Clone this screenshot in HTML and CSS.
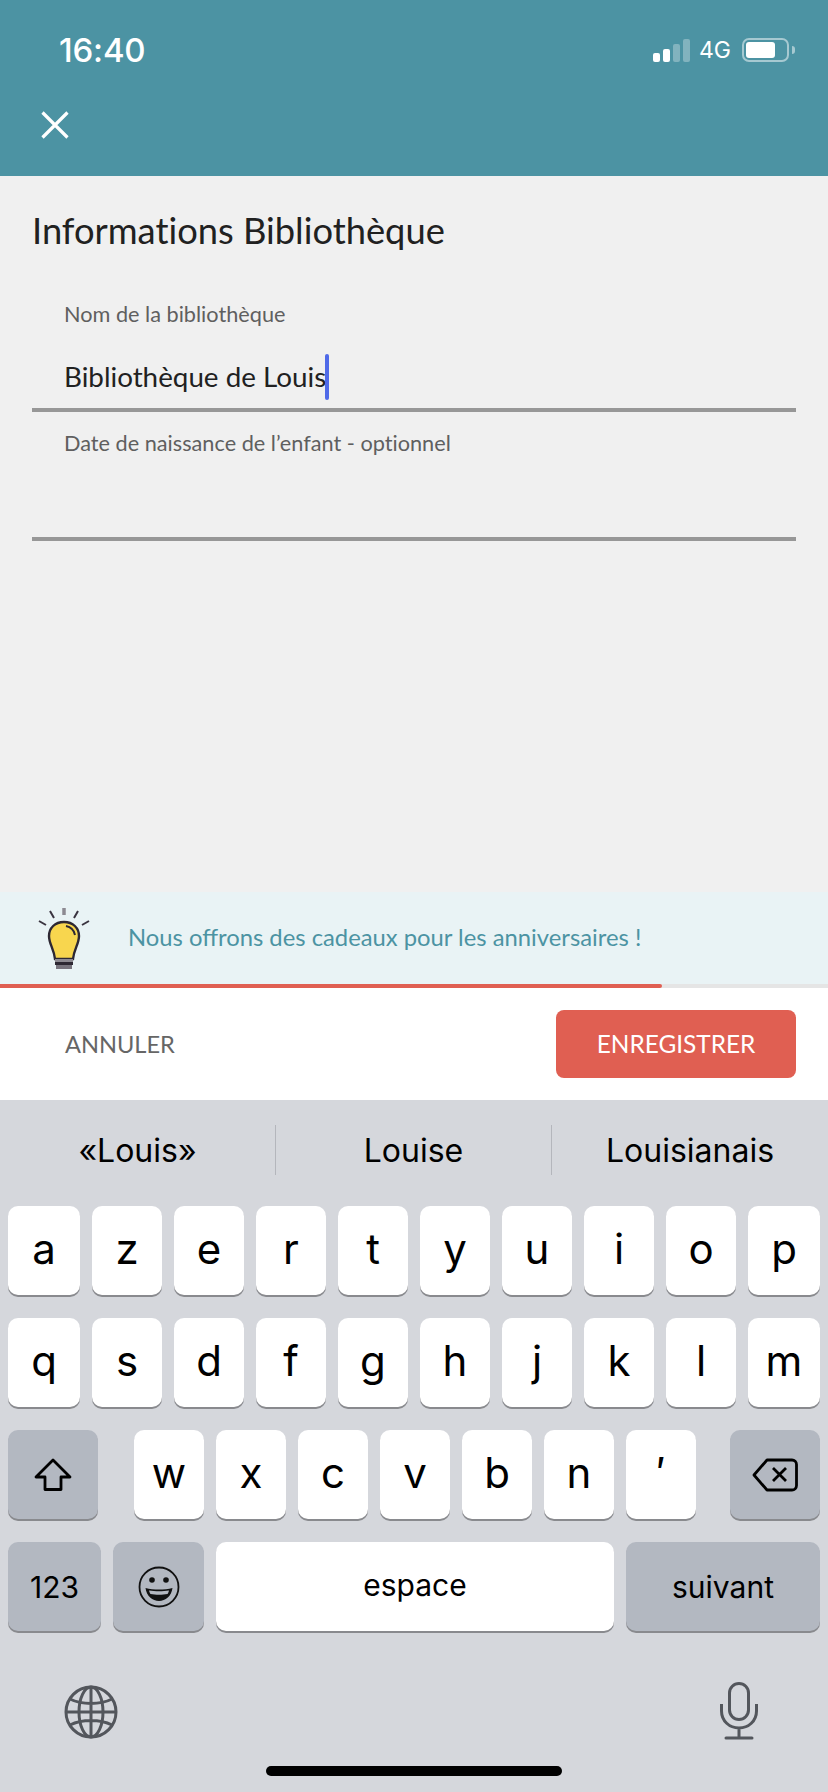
FILE: index.html
```html
<!DOCTYPE html>
<html lang="fr">
<head>
<meta charset="utf-8">
<title>Informations Bibliothèque</title>
<link rel="stylesheet" href="styles.css">
</head>
<body>
<div class="app">
  <header class="header">
    <div class="status">
      <span class="time">16:40</span>
      <div class="status-right">
        <div class="signal"><i class="bar b1"></i><i class="bar b2"></i><i class="bar b3"></i><i class="bar b4"></i></div>
        <span class="net">4G</span>
        <div class="battery"><div class="battery-body"><div class="battery-fill"></div></div><div class="battery-tip"></div></div>
      </div>
    </div>
    <svg class="close" viewBox="0 0 28 28" width="28" height="28"><path d="M1.5 1.5 26.500 26.500M26.500 1.500 1.500 26.500" stroke="#fff" stroke-width="3.200" fill="none"/></svg>
  </header>

  <main class="main">
    <h1 class="title">Informations Bibliothèque</h1>
    <div class="field field-first">
      <div class="label">Nom de la bibliothèque</div>
      <div class="value"><span>Bibliothèque de Louis</span><i class="caret"></i></div>
    </div>
    <div class="field">
      <div class="label">Date de naissance de l’enfant - optionnel</div>
      <div class="value"></div>
    </div>
  </main>

  <section class="tip">
    <svg class="bulb" viewBox="0 0 54 62" width="54" height="62">
      <g stroke="#3a3440" stroke-width="2" fill="none">
        <path d="M27 0v7" stroke="#8d8a92" stroke-width="3.500"/>
        <path d="M13 3l4 7M41 3l-4 7M2 13l7 4M52 13l-7 4"/>
      </g>
      <path d="M27 14c-9 0-15 6-15 14 0 8 5 13 6 23h18c1-10 6-15 6-23 0-8-6-14-15-14z" fill="#f8d64e" stroke="#2d2833" stroke-width="2.400"/>
      <path d="M29 18c5 1 8 4 9 9" stroke="#2d2833" stroke-width="2" fill="none"/>
      <rect x="18" y="51" width="18" height="3" fill="#8d8a92"/>
      <rect x="18" y="54" width="18" height="3" fill="#2d2833"/>
      <rect x="19" y="57" width="16" height="4" fill="#77737d"/>
    </svg>
    <p class="tip-text">Nous offrons des cadeaux pour les anniversaires !</p>
  </section>
  <div class="progress"><div class="progress-fill"></div></div>

  <footer class="actions">
    <span class="cancel">ANNULER</span>
    <span class="save">ENREGISTRER</span>
  </footer>

  <section class="keyboard">
    <div class="suggestions">
      <span class="sug">«Louis»</span>
      <span class="sug">Louise</span>
      <span class="sug">Louisianais</span>
    </div>
    <div class="rows">
      <div class="row row-10">
        <span class="key">a</span><span class="key">z</span><span class="key">e</span><span class="key">r</span><span class="key">t</span><span class="key">y</span><span class="key">u</span><span class="key">i</span><span class="key">o</span><span class="key">p</span>
      </div>
      <div class="row row-10">
        <span class="key">q</span><span class="key">s</span><span class="key">d</span><span class="key">f</span><span class="key">g</span><span class="key">h</span><span class="key">j</span><span class="key">k</span><span class="key">l</span><span class="key">m</span>
      </div>
      <div class="row row-3">
        <span class="key dark"><svg viewBox="0 0 40 34" width="40" height="34"><path d="M20 2 3 19h9v12.500h16V19h9z" fill="none" stroke="#000" stroke-width="2.800" stroke-linejoin="round"/></svg></span>
        <span class="key">w</span><span class="key">x</span><span class="key">c</span><span class="key">v</span><span class="key">b</span><span class="key">n</span><span class="key tick">′</span>
        <span class="key dark"><svg viewBox="0 0 46 34" width="46" height="34"><path d="M15 2h25a4.500 4.500 0 0 1 4.500 4.500v21a4.500 4.500 0 0 1-4.500 4.500H15L2 17z" fill="none" stroke="#000" stroke-width="2.800" stroke-linejoin="round"/><path d="M21 10l13 13M34 10 21 23" stroke="#000" stroke-width="2.800" fill="none"/></svg></span>
      </div>
      <div class="row row-4">
        <span class="key dark small">123</span>
        <span class="key dark"><svg viewBox="0 0 42 42" width="42" height="42"><circle cx="21" cy="21" r="19.500" fill="none" stroke="#111" stroke-width="1.800"/><circle cx="14" cy="14" r="2.800" fill="#111"/><circle cx="28" cy="14" r="2.800" fill="#111"/><path d="M7.500 22c8 2 19 2 27 0-1 8-7 13-13.500 13S8.500 30 7.500 22z" fill="#111"/><path d="M11 24.500c6 1 14 1 20 0-.5 2-1 3-1.500 3.500-5 1-12 1-17 0-.5-.5-1-1.500-1.500-3.500z" fill="#b3b8c1"/></svg></span>
        <span class="key small">espace</span>
        <span class="key dark small">suivant</span>
      </div>
    </div>
    <div class="kb-bottom">
      <svg class="globe" viewBox="0 0 54 54" width="54" height="54"><g fill="none" stroke="#53565c" stroke-width="3"><circle cx="27" cy="27" r="25"/><ellipse cx="27" cy="27" rx="12" ry="25"/><path d="M27 2v50M2 27h50M6 14c12 6 30 6 42 0M6 40c12-6 30-6 42 0"/></g></svg>
      <svg class="mic" viewBox="0 0 38 58" width="38" height="58"><g fill="none" stroke="#53565c" stroke-width="3"><rect x="9.500" y="1.500" width="19" height="36" rx="9.500"/><path d="M1.500 22v7c0 10 8 17 17.500 17s17.500-7 17.500-17v-7M19 46v10"/><path d="M6 56h26" stroke-linecap="round"/></g></svg>
    </div>
    <div class="home-wrap"><div class="home"></div></div>
  </section>
</div>
</body>
</html>
```

FILE: styles.css
```css
* { box-sizing: border-box; }
html, body { margin: 0; padding: 0; }
body { width: 828px; height: 1792px; overflow: hidden; background: #f0f0f0; font-family: Lato, "Liberation Sans", sans-serif; }
.app { display: flex; flex-direction: column; height: 1792px; }

/* header */
.header { height: 176px; flex: none; background: #4c93a3; color: #fff; padding-top: 25px; }
.status { height: 50px; display: flex; align-items: center; justify-content: space-between; padding: 0 33px 0 59px; }
.time { font: 500 33px/50px Inter, sans-serif; letter-spacing: -0.2px; }
.status-right { display: flex; align-items: center; }
.signal { display: flex; align-items: flex-end; gap: 3.500px; height: 23px; margin-right: 9px; }
.bar { display: block; width: 6.500px; background: #fff; border-radius: 2px; }
.b1 { height: 9px; }
.b2 { height: 13px; }
.b3 { height: 18px; background: rgba(255,255,255,.3); }
.b4 { height: 23px; background: rgba(255,255,255,.3); }
.net { font: 400 23px/26px Inter, sans-serif; margin-right: 11px; }
.battery { display: flex; align-items: center; }
.battery-body { width: 47px; height: 24px; border: 2px solid rgba(255,255,255,.5); border-radius: 7px; padding: 2px; }
.battery-fill { width: 29px; height: 16px; background: #fff; border-radius: 3px; }
.battery-tip { width: 3px; height: 8px; margin-left: 3px; background: rgba(255,255,255,.5); border-radius: 0 3px 3px 0; }
.close { display: block; margin: 36px 0 0 41px; }

/* form */
.main { flex: 1; padding: 0 32px; }
.title { margin: 32px 0 0; font: 400 36.3px/44px Lato, sans-serif; color: #212121; }
.field-first { margin-top: 48px; }
.label { padding-left: 32px; font: 400 21.7px/28px Lato, sans-serif; color: #5f5f5f; }
.value { height: 84px; padding: 29px 0 0 32px; display: flex; align-items: flex-start; border-bottom: 4px solid #979797; font: 400 27.8px/40px Lato, sans-serif; color: #212121; }
.field { margin-bottom: 17px; }
.caret { display: block; width: 4px; height: 46px; margin-top: -3px; margin-left: -1px; background: #4f6ae8; border-radius: 2px; }
.title, .label, .value, .tip-text { font-variant-ligatures: none; }

/* tip */
.tip { height: 92px; flex: none; display: flex; align-items: center; background: #e9f3f5; padding-left: 37px; }
.bulb { display: block; margin-top: 1px; }
.tip-text { margin: -2px 0 0 37px; font: 400 23.8px/30px Lato, sans-serif; color: #4c93a3; }
.progress { height: 4px; flex: none; background: #e5e5e5; }
.progress-fill { width: 662px; height: 4px; background: #e05f52; border-radius: 0 2px 2px 0; }

/* actions */
.actions { height: 112px; flex: none; display: flex; align-items: center; justify-content: space-between; background: #fff; padding: 0 32px 0 65px; }
.cancel { font: 400 23.6px/30px Lato, sans-serif; color: #666; }
.save { width: 240px; height: 68px; display: flex; align-items: center; justify-content: center; background: #e05f52; color: #fff; border-radius: 8px; font: 400 24.4px/30px Lato, sans-serif; }

/* keyboard */
.keyboard { height: 692px; flex: none; background: #d5d7dc; font-family: Inter, sans-serif; color: #000; }
.suggestions { height: 106px; padding: 25px 0 31px; display: grid; grid-template-columns: 276px 276px 276px; }
.sug { display: flex; align-items: center; justify-content: center; font-size: 32px; border-right: 1px solid #b4b6bc; }
.sug:last-child { border-right: 0; }
.rows { display: flex; flex-direction: column; gap: 23px; padding: 0 8px; }
.row { display: grid; gap: 12px; height: 89px; }
.row-10 { grid-template-columns: 72px repeat(8, 70px) 72px; }
.row-3 { display: flex; }
.row-3 .key { width: 70px; }
.row-3 .key.dark { width: 90px; }
.row-3 .key.dark:first-child { margin-right: 24px; }
.row-3 .key.dark:last-child { margin-left: 22px; }
.row-4 { grid-template-columns: 93px 91px 398px 194px; }
.key { display: flex; align-items: center; justify-content: center; background: #fff; border-radius: 10px; box-shadow: 0 2px 0 #898a8e; font-size: 42px; line-height: 1; padding-bottom: 4px; }
.key.dark { background: #b3b8c1; padding-bottom: 0; }
.key.small { font-size: 30px; }
.kb-bottom { display: flex; justify-content: space-between; align-items: flex-start; padding: 54px 70px 0 64px; height: 135px; }
.kb-bottom svg { display: block; }
.kb-bottom .mic { margin-top: -3px; }
.home-wrap { display: flex; justify-content: center; }
.home { width: 296px; height: 10px; background: #000; border-radius: 5px; }
```
